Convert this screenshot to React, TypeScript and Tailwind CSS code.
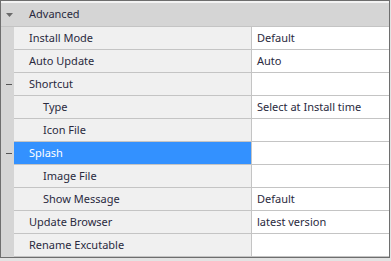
import React from 'react';

type Row = {
  name: string;
  value?: string;
  level: 0 | 1;
  toggle?: boolean;
  selected?: boolean;
};

const rows: Row[] = [
  { name: 'Install Mode', value: 'Default', level: 0 },
  { name: 'Auto Update', value: 'Auto', level: 0 },
  { name: 'Shortcut', level: 0, toggle: true },
  { name: 'Type', value: 'Select at Install time', level: 1 },
  { name: 'Icon File', level: 1 },
  { name: 'Splash', level: 0, toggle: true, selected: true },
  { name: 'Image File', level: 1 },
  { name: 'Show Message', value: 'Default', level: 1 },
  { name: 'Update Browser', value: 'latest version', level: 0 },
  { name: 'Rename Excutable', level: 0 },
];

const App: React.FC = () => {
  return (
    <div className="w-[391px] h-[261px] bg-[#e3e3e3]" style={{ fontFamily: '"Noto Sans", "Open Sans", sans-serif' }}>
      <div className="w-[390px] h-[258px] border border-[#6e6e6e] bg-[#f3f3f3] pt-[2px] flex flex-col text-[11px] text-[#2a2a3e]">
        {/* category header */}
        <div className="flex items-center h-[24px] bg-[#d5d5d5] border-b border-[#c4c4c4]">
          <div className="w-[13px] flex justify-center">
            <svg width="7" height="4" viewBox="0 0 7 4" className="ml-[4px] mt-[1px]">
              <path d="M0 0 H7 L3.5 4 Z" fill="#6a6a6a" />
            </svg>
          </div>
          <span className="pl-[15px]">Advanced</span>
        </div>

        {rows.map((row) => (
          <div key={row.name} className="flex h-[23px]">
            <div className="w-[13px] bg-[#d5d5d5] flex items-center justify-center">
              {row.toggle && <div className="w-[6px] h-px bg-[#555] ml-[3px]" />}
            </div>
            <div
              className={`w-[237px] flex items-center border-b border-[#c4c4c4] ${row.selected ? 'bg-[#3391ff] text-white' : 'bg-[#f0f0f0]'} ${row.level === 1 ? 'pl-[29px]' : 'pl-[15px]'}`}
            >
              {row.name}
            </div>
            <div className="flex-1 flex items-center bg-white border-l border-b border-[#c4c4c4] pl-[5px]">
              {row.value}
            </div>
          </div>
        ))}
      </div>
    </div>
  );
};

export default App;
